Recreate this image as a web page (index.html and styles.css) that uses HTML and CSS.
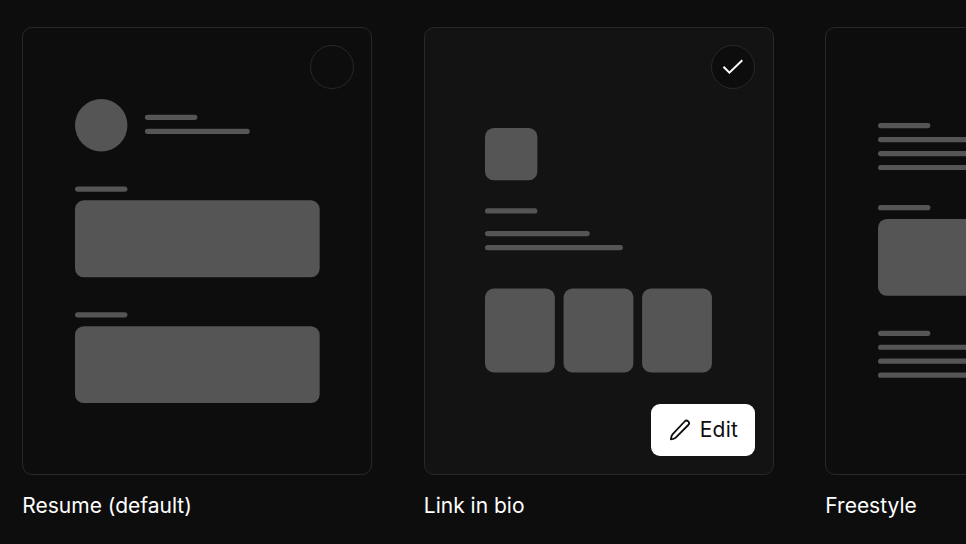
FILE: index.html
```html
<!DOCTYPE html>
<html lang="en">
<head>
<meta charset="utf-8">
<title>Templates</title>
<link rel="stylesheet" href="styles.css">
</head>
<body>
<main class="templates">
  <article class="template">
    <div class="card">
      <svg class="preview" width="244.7" height="304.1" viewBox="0 0 140 174" aria-hidden="true">
        <circle cx="15" cy="15" r="15"/>
        <rect x="40" y="9" width="30" height="3" rx="1.5"/>
        <rect x="40" y="17" width="60" height="3" rx="1.5"/>
        <rect y="50" width="30" height="3" rx="1.5"/>
        <rect y="58" width="140" height="44" rx="5"/>
        <rect y="122" width="30" height="3" rx="1.5"/>
        <rect y="130" width="140" height="44" rx="5"/>
      </svg>
      <span class="radio"></span>
    </div>
    <h2 class="name">Resume (default)</h2>
  </article>
  <article class="template">
    <div class="card selected">
      <svg class="preview raised" width="244.4" height="244.4" viewBox="0 0 140 140" aria-hidden="true">
        <rect width="30" height="30" rx="5"/>
        <rect y="46" width="30" height="3" rx="1.5"/>
        <rect y="59" width="60" height="3" rx="1.5"/>
        <rect y="67" width="79" height="3" rx="1.5"/>
        <rect y="92" width="40" height="48" rx="5"/>
        <rect x="45" y="92" width="40" height="48" rx="5"/>
        <rect x="90" y="92" width="40" height="48" rx="5"/>
      </svg>
      <span class="radio">
        <svg width="22" height="16" viewBox="0 0 22 16" fill="none" stroke="currentColor" stroke-width="2" aria-hidden="true"><path d="M1.5 7.7 7.4 13.6 20.3 1.2"/></svg>
      </span>
      <button class="edit" type="button">
        <svg width="22" height="22" viewBox="0 0 22 22" fill="none" stroke="currentColor" stroke-width="1.8" stroke-linejoin="round" aria-hidden="true"><path d="M15.6 2.5a2.5 2.5 0 0 1 3.7 3.5L6.7 18.6C5.6 19.7 3.9 20.1 1.9 20.3 2.1 18.3 2.5 16.5 3.5 15.3Z"/></svg>
        Edit
      </button>
    </div>
    <h2 class="name">Link in bio</h2>
  </article>
  <article class="template">
    <div class="card">
      <svg class="preview raised" width="244.4" height="254.8" viewBox="0 0 140 146" aria-hidden="true">
        <rect width="30" height="3" rx="1.5"/>
        <rect y="8" width="140" height="3" rx="1.5"/>
        <rect y="16" width="140" height="3" rx="1.5"/>
        <rect y="24" width="140" height="3" rx="1.5"/>
        <rect y="47" width="30" height="3" rx="1.5"/>
        <rect y="55" width="140" height="44" rx="5"/>
        <rect y="119" width="30" height="3" rx="1.5"/>
        <rect y="127" width="140" height="3" rx="1.5"/>
        <rect y="135" width="140" height="3" rx="1.5"/>
        <rect y="143" width="140" height="3" rx="1.5"/>
      </svg>
      <span class="radio"></span>
    </div>
    <h2 class="name">Freestyle</h2>
  </article>
</main>
</body>
</html>
```
FILE: styles.css
```css
* { box-sizing: border-box; }
body {
  margin: 0;
  height: 544px;
  overflow: hidden;
  background: #0d0d0d;
  color: #fff;
  font-family: Inter, sans-serif;
}
.templates {
  display: flex;
  gap: 51.5px;
  height: 544px;
  padding: 27px 22.3px;
  overflow: hidden;
}
.template { flex: none; width: 350px; }
.card {
  position: relative;
  display: flex;
  align-items: center;
  height: 448px;
  padding-left: 52px;
  border: 1px solid #282828;
  border-radius: 10px;
}
.card.selected { background: #131313; padding-left: 60px; }
.preview { flex: none; fill: #555; overflow: visible; }
.preview.raised { margin-bottom: 2px; }
.radio {
  position: absolute;
  top: 17px;
  right: 17.5px;
  display: flex;
  align-items: center;
  justify-content: center;
  width: 44px;
  height: 44px;
  border: 1px solid #282828;
  border-radius: 50%;
  background: #0d0d0d;
}
.edit {
  position: absolute;
  right: 18px;
  bottom: 18px;
  display: flex;
  align-items: center;
  gap: 9px;
  width: 104px;
  height: 52px;
  padding: 0 0 0 18px;
  border: 0;
  border-radius: 9px;
  background: #fff;
  color: #0d0d0d;
  font: 400 21px/26px Inter, sans-serif;
  letter-spacing: 0.2px;
}
.name {
  margin: 18px 0 0;
  font-size: 21px;
  font-weight: 400;
  line-height: 26px;
}
```
